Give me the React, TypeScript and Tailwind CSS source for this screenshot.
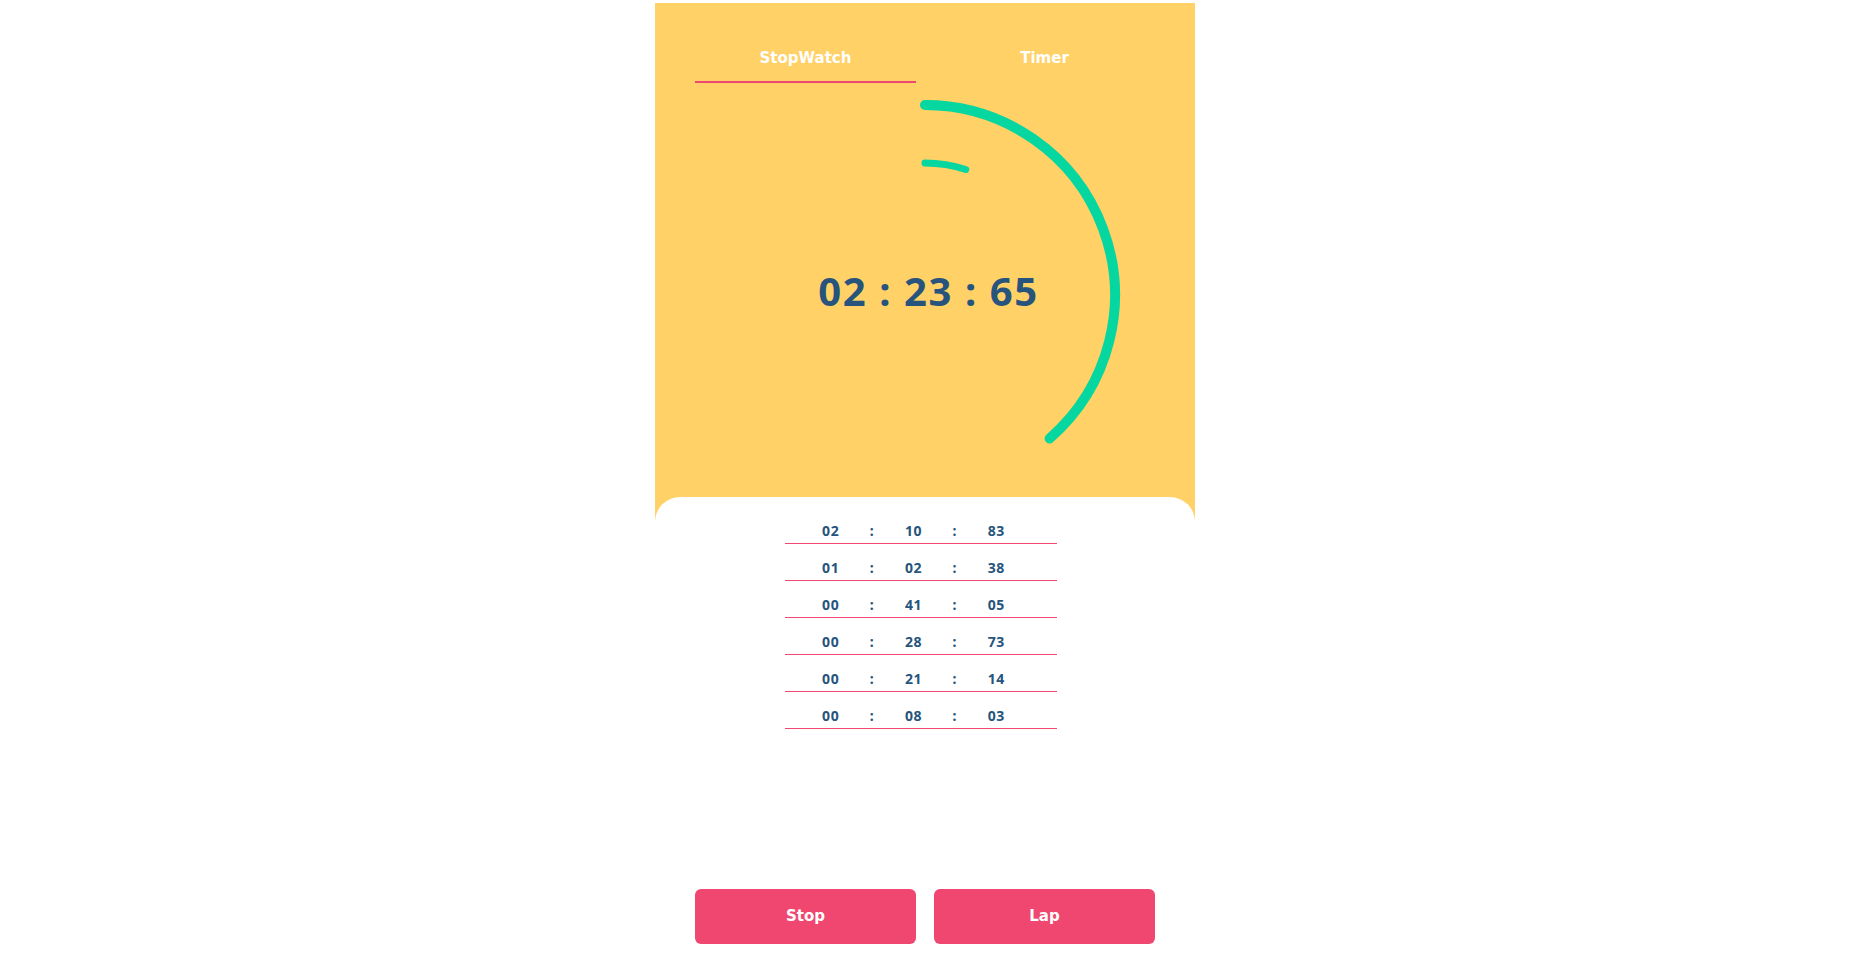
import React from "react";

const laps = [
  ["02", "10", "83"],
  ["01", "02", "38"],
  ["00", "41", "05"],
  ["00", "28", "73"],
  ["00", "21", "14"],
  ["00", "08", "03"],
];

function Dial() {
  return (
    <svg width="540" height="434" viewBox="0 0 540 434" className="block">
      <path
        d="M270 17 A190 190 0 0 1 394.6 350.4"
        fill="none"
        stroke="#06D6A0"
        strokeWidth="10"
        strokeLinecap="round"
      />
      <path
        d="M270 75 A132 132 0 0 1 310.8 81.5"
        fill="none"
        stroke="#06D6A0"
        strokeWidth="7"
        strokeLinecap="round"
      />
    </svg>
  );
}

export default function App() {
  return (
    <div className="min-h-screen bg-white font-['DejaVu_Sans',sans-serif]">
      <div className="ml-[655px] mt-[3px] w-[540px]">
        {/* yellow header with tabs and dial */}
        <div className="bg-[#FFD166] pt-[32px]">
          <div className="mx-[40px] grid grid-cols-2 gap-[18px]">
            <button className="flex h-[48px] items-center justify-center border-b-2 border-[#EF476F] text-[15px] font-bold text-white">
              StopWatch
            </button>
            <button className="flex h-[48px] items-center justify-center border-b-2 border-transparent text-[15px] font-bold text-white">
              Timer
            </button>
          </div>
          <div className="relative mt-[5px]">
            <Dial />
            <div className="absolute inset-x-0 top-[176px] flex justify-center pl-[7px]">
              <span className="font-['Noto_Sans',sans-serif] text-[40px] font-bold leading-[54px] tracking-[1.6px] text-[#26547C]">
                02 : 23 : 65
              </span>
            </div>
          </div>
        </div>

        {/* laps + actions */}
        <div className="relative -mt-[25px] rounded-t-[25px] bg-white pt-[10px]">
          <div className="ml-[130px] w-[272px]">
            {laps.map((lap, i) => (
              <div
                key={i}
                className="grid grid-cols-5 border-b border-[#EF476F] pb-[3px] pl-[25px] pr-[40px] pt-[14px] font-['Noto_Sans',sans-serif] text-[14px] font-bold leading-[19px] tracking-[0.6px] text-[#26547C]"
              >
                <span className="text-center">{lap[0]}</span>
                <span className="text-center">:</span>
                <span className="text-center">{lap[1]}</span>
                <span className="text-center">:</span>
                <span className="text-center">{lap[2]}</span>
              </div>
            ))}
          </div>

          <div className="mx-[40px] mt-[160px] grid grid-cols-2 gap-[18px]">
            <button className="h-[55px] rounded-[6px] bg-[#EF476F] text-[15px] font-bold text-white">
              Stop
            </button>
            <button className="h-[55px] rounded-[6px] bg-[#EF476F] text-[15px] font-bold text-white">
              Lap
            </button>
          </div>
        </div>
      </div>
    </div>
  );
}
